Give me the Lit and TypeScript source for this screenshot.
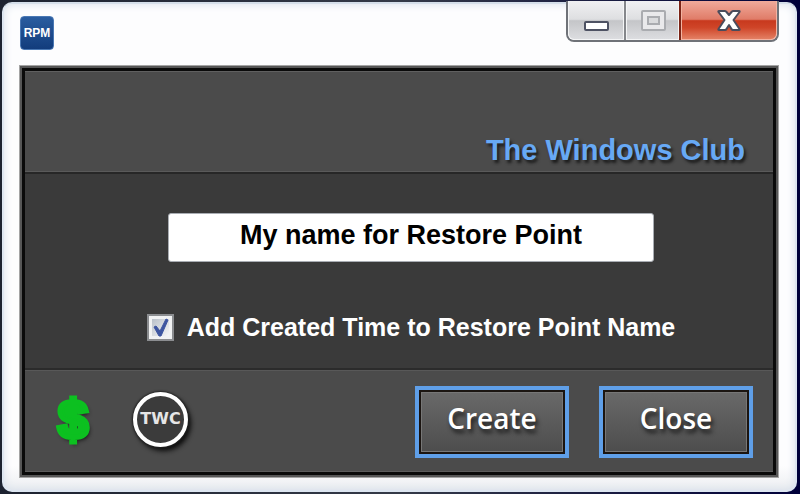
import { LitElement, html, css } from "lit";
import { customElement, state } from "lit/decorators.js";

@customElement("window-controls")
class WindowControls extends LitElement {
  static styles = css`
    :host { display: block; }
    .group {
      display: flex;
      box-sizing: border-box;
      height: 41px;
      border: 2px solid #6f7278;
      border-top: 0;
      border-radius: 0 0 8px 8px;
      overflow: hidden;
    }
    button {
      display: grid;
      place-items: center;
      box-sizing: border-box;
      width: 56px;
      padding: 0;
      border: 1px solid #f4f5f6;
      border-top: 0;
      background: linear-gradient(#f0f0f2 0%, #dedfe1 48%, #c4c5c8 52%, #dcdde0 100%);
    }
    button + button { box-shadow: -2px 0 0 #85878b; margin-left: 2px; }
    .min { border-bottom-left-radius: 6px; }
    .max { width: 53px; }
    .close {
      width: 96px;
      border: 1px solid #f3b3a2;
      border-top: 0;
      border-bottom-right-radius: 6px;
      background: linear-gradient(#f0aa9b 0%, #e07c68 48%, #c8391e 52%, #cf4528 70%, #e37f63 100%);
    }
    button.close { box-shadow: -2px 0 0 #7c2416, 0 2px 0 #7c3a30; }
    svg { display: block; }
  `;

  render() {
    return html`
      <div class="group">
        <button class="min" aria-label="Minimize">
          <svg width="28" height="38" viewBox="0 0 28 38">
            <rect x="3" y="21" width="23" height="8" rx="1" fill="#fff" stroke="#4e5263" stroke-width="2" />
          </svg>
        </button>
        <button class="max" aria-label="Maximize" disabled>
          <svg width="28" height="38" viewBox="0 0 28 38" fill="none" stroke="#aaacb0" stroke-width="2">
            <rect x="3" y="10" width="23" height="19" rx="1" fill="#e9e9eb" />
            <rect x="9" y="16" width="11" height="7" fill="#dadbdd" />
          </svg>
        </button>
        <button class="close" aria-label="Close window">
          <svg width="28" height="38" viewBox="0 0 28 38">
            <path
              d="M4 10h6q1 0 1.500 1L14 14l2.500-3q.5-1 1.500-1h6q1 0 .5 1L18.500 19l6 9q.5 1-.5 1h-6q-1 0-1.500-1L14 24l-2.500 4q-.5 1-1.500 1H4q-1 0-.5-1l6-9L3.500 11q-.5-1 .5-1z"
              fill="#fff" stroke="#4a4c5c" stroke-width="2" stroke-linejoin="round" />
          </svg>
        </button>
      </div>
    `;
  }
}

@customElement("app-root")
class AppRoot extends LitElement {
  @state() private addTime = true;

  static styles = css`
    :host {
      display: block;
      box-sizing: border-box;
      min-height: 100vh;
      padding: 2px 3px 2px 2px;
      background: linear-gradient(90deg, #1c2230 0%, #343a48 50%, #00003a 100%);
      font-family: "Liberation Sans", Arial, sans-serif;
    }
    .window {
      box-sizing: border-box;
      min-height: calc(100vh - 4px);
      padding: 0 16px 13px 15px;
      border: 2px solid #dde6f1;
      border-top-color: #d5dfea;
      border-radius: 10px;
      background: linear-gradient(#ffffff00 0 95%, #eceef1 100%), #fdfdfe;
      box-shadow: inset 0 0 8px #d5deea;
    }
    .titlebar {
      display: flex;
      justify-content: space-between;
      align-items: flex-start;
      height: 62px;
    }
    .app-icon {
      display: grid;
      place-items: center;
      box-sizing: border-box;
      width: 34px;
      height: 34px;
      margin: 12px 0 0 1px;
      border: 1px solid #4a78b4;
      border-radius: 4px;
      background: linear-gradient(#2a5da0, #123c7c);
      color: #fff;
      font: bold 12px/1 "Liberation Sans", Arial, sans-serif;
    }
    window-controls { margin-top: -3px; }
    .panel {
      border: 2px solid #565656;
      box-shadow: 0 0 0 1px #a4a4a4;
      margin: 0 1px;
    }
    .inner {
      border: 3px solid #0a0a0a;
      background: #4b4b4b;
      color: #fff;
    }
    header {
      box-sizing: border-box;
      height: 101px;
      padding: 60px 28px 0;
      border-top: 1px solid #606060;
      border-bottom: 1px solid #5a5a5a;
      text-align: right;
    }
    h1 {
      margin: 0;
      color: #67a9f5;
      font-size: 29px;
      line-height: 36px;
      font-weight: bold;
      text-shadow: 2px 3px 3px #1c1c1c;
    }
    form { margin: 0; }
    .body {
      display: flex;
      flex-direction: column;
      align-items: center;
      gap: 50px;
      box-sizing: border-box;
      height: 198px;
      padding-top: 39px;
      border-top: 2px solid #272727;
      border-bottom: 2px solid #2b2b2b;
      background: #3a3a3a;
    }
    .name {
      box-sizing: border-box;
      width: 65%;
      height: 49px;
      padding: 0 0 4px;
      margin-left: 24px;
      border: 1px solid #a9adb3;
      border-radius: 3px;
      background: #fff;
      color: #000;
      font: bold 27px/32px "Liberation Sans", Arial, sans-serif;
      text-align: center;
      outline: 0;
    }
    .check {
      display: flex;
      align-items: center;
      gap: 13px;
      margin-left: 24px;
      font-size: 25px;
      line-height: 30px;
      font-weight: bold;
    }
    .box { display: grid; }
    .box > * { grid-area: 1 / 1; }
    .box input {
      appearance: none;
      box-sizing: border-box;
      width: 27px;
      height: 27px;
      margin: 0;
      border: 2px solid #8b8d90;
      background: linear-gradient(135deg, #b9c0c9, #f5f6f7) center / 17px 17px no-repeat, #f1f2f3;
    }
    .box svg { pointer-events: none; }
    .box input:not(:checked) + svg { visibility: hidden; }
    footer {
      display: flex;
      align-items: center;
      justify-content: space-between;
      box-sizing: border-box;
      height: 102px;
      padding: 2px 20px 0 26px;
      border-top: 1px solid #585858;
      border-bottom: 1px solid #5c5c5c;
    }
    .links, .actions { display: flex; align-items: center; }
    .links { gap: 38px; padding-bottom: 6px; }
    .actions { gap: 30px; }
    .links a { text-decoration: none; }
    .donate {
      width: 44px;
      color: #0cc020;
      font-size: 54px;
      line-height: 56px;
      font-weight: bold;
      text-align: center;
      -webkit-text-stroke: 5px #0cc020;
      text-shadow: 2px 3px 4px #111;
    }
    .club {
      display: grid;
      place-items: center;
      box-sizing: border-box;
      width: 55px;
      height: 55px;
      border: 4px solid #fff;
      border-radius: 50%;
      background: #3b3b3b;
      box-shadow: 0 0 2px 1px #222, 3px 4px 5px #0c0c0c;
      color: #e6e6e6;
      font: bold 16px/18px "DejaVu Sans", sans-serif;
    }
    .action {
      box-sizing: border-box;
      width: 154px;
      height: 72px;
      padding: 0 0 8px;
      border: 4px solid #5f9fe8;
      background: linear-gradient(#6a6a6a, #4c4c4c);
      box-shadow: inset 0 0 0 2px #1b1511, inset 0 0 0 3px #777;
      color: #fff;
      font: 600 28px/40px "Open Sans", "Noto Sans", sans-serif;
      text-shadow: 2px 4px 4px #1c1c1c;
    }
  `;

  private toggle(e: Event) {
    this.addTime = (e.target as HTMLInputElement).checked;
  }

  render() {
    return html`
      <main class="window">
        <div class="titlebar">
          <span class="app-icon">RPM</span>
          <window-controls></window-controls>
        </div>
        <div class="panel">
          <form class="inner" @submit=${(e: Event) => e.preventDefault()}>
            <header><h1>The Windows Club</h1></header>
            <div class="body">
              <input class="name" type="text" aria-label="Restore point name" value="My name for Restore Point" />
              <label class="check">
                <span class="box">
                  <input type="checkbox" .checked=${this.addTime} @change=${this.toggle} />
                  <svg width="27" height="27" viewBox="0 0 27 27">
                    <path d="M7 13l2-1 4 5 6-12 2 1-7 16h-2z" fill="#3d55a0" stroke="#3d55a0" stroke-linejoin="round" />
                  </svg>
                </span>
                Add Created Time to Restore Point Name
              </label>
            </div>
            <footer>
              <div class="links">
                <a class="donate" href="#donate" aria-label="Donate">$</a>
                <a class="club" href="#club" aria-label="The Windows Club">TWC</a>
              </div>
              <div class="actions">
                <button class="action" type="submit">Create</button>
                <button class="action" type="button">Close</button>
              </div>
            </footer>
          </form>
        </div>
      </main>
    `;
  }
}
